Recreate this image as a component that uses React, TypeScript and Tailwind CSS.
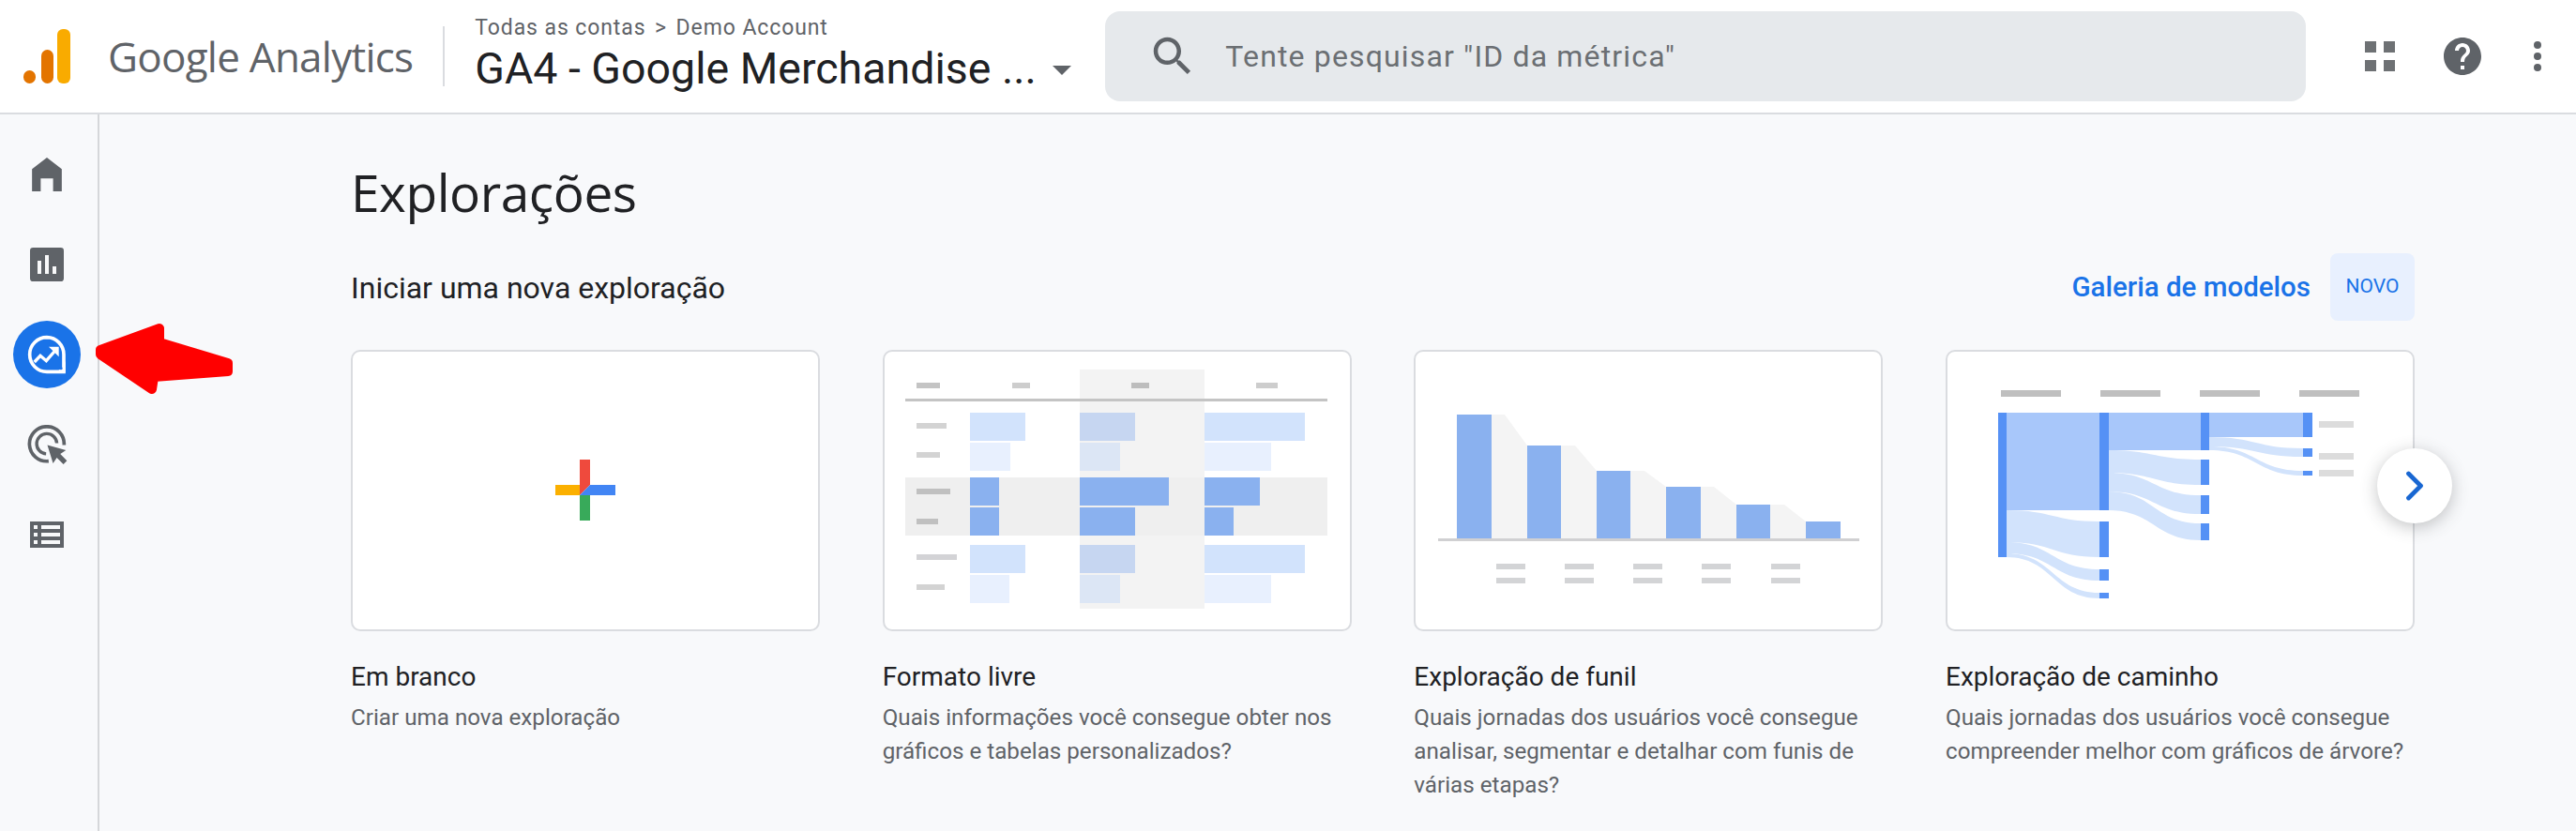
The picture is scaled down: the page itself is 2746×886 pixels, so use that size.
import { ChevronRight } from "lucide-react";

const GREY = "#5f6368";

// bars of the free-form thumbnail: [x, y, width, height, colour]
const freeBars: [number, number, number, number, string][] = [
  [93, 67, 59, 30, "#d2e3fc"],
  [210, 67, 59, 30, "#c6d6f1"],
  [343, 67, 107, 30, "#d2e3fc"],
  [93, 99, 43, 30, "#e8f0fe"],
  [210, 99, 43, 30, "#dce6f5"],
  [343, 99, 71, 30, "#e8f0fe"],
  [93, 136, 31, 30, "#8ab1ef"],
  [210, 136, 95, 30, "#8ab1ef"],
  [343, 136, 59, 30, "#8ab1ef"],
  [93, 168, 31, 30, "#8ab1ef"],
  [210, 168, 59, 30, "#8ab1ef"],
  [343, 168, 31, 30, "#8ab1ef"],
  [93, 208, 59, 30, "#d2e3fc"],
  [210, 208, 59, 30, "#c6d6f1"],
  [343, 208, 107, 30, "#d2e3fc"],
  [93, 240, 42, 30, "#e8f0fe"],
  [210, 240, 43, 30, "#dce6f5"],
  [343, 240, 71, 30, "#e8f0fe"],
];

const freeLabels: [number, number, number, string][] = [
  [36, 35, 25, "#c4c4c4"],
  [138, 35, 19, "#cdcdcd"],
  [265, 35, 19, "#bdbdbd"],
  [398, 35, 23, "#cdcdcd"],
  [36, 78, 32, "#d3d3d3"],
  [36, 109, 25, "#d3d3d3"],
  [36, 148, 36, "#c0c0c0"],
  [36, 180, 23, "#c0c0c0"],
  [36, 218, 43, "#d3d3d6"],
  [36, 250, 30, "#d3d3d3"],
];

const FreeFormThumb = () => (
  <svg viewBox="2 2 496 296" className="h-full w-full">
    <rect x="210" y="21" width="133" height="255" fill="#f3f3f3" />
    <rect x="24" y="136" width="450" height="62" fill="#efefef" />
    <rect x="24" y="52" width="450" height="3" fill="#c4c4c4" />
    {freeLabels.map(([x, y, w, c]) => (
      <rect key={`${x}-${y}`} x={x} y={y} width={w} height="6" fill={c} />
    ))}
    {freeBars.map(([x, y, w, h, c]) => (
      <rect key={`${x}-${y}`} x={x} y={y} width={w} height={h} fill={c} />
    ))}
  </svg>
);

const funnelBars = [
  [46, 69, 37],
  [121, 102, 36],
  [195, 129, 36],
  [269, 146, 37],
  [344, 165, 36],
  [418, 183, 37],
];

const FunnelThumb = () => (
  <svg viewBox="2 2 496 296" className="h-full w-full">
    <polygon points="83,69 97,69 121,102 121,201 83,201" fill="#f4f4f4" />
    <polygon points="157,102 172,102 195,129 195,201 157,201" fill="#f4f4f4" />
    <polygon points="231,129 246,129 269,146 269,201 231,201" fill="#f4f4f4" />
    <polygon points="306,146 320,146 344,165 344,201 306,201" fill="#f4f4f4" />
    <polygon points="380,165 395,165 418,183 418,201 380,201" fill="#f4f4f4" />
    {funnelBars.map(([x, y, w]) => (
      <rect key={x} x={x} y={y} width={w} height={201 - y} fill="#8ab1ef" />
    ))}
    <rect x="26" y="201" width="449" height="3" fill="#d0d0d2" />
    {[88, 161, 234, 307, 381].map((x) => (
      <g key={x} fill="#d3d4d6">
        <rect x={x} y="228" width="31" height="6" />
        <rect x={x} y="243" width="31" height="6" />
      </g>
    ))}
  </svg>
);

// one sankey ribbon between two columns
const ribbon = (x0: number, x1: number, a0: number, a1: number, b0: number, b1: number) => {
  const m = (x0 + x1) / 2;
  return `M${x0} ${a0} C${m} ${a0} ${m} ${b0} ${x1} ${b0} L${x1} ${b1} C${m} ${b1} ${m} ${a1} ${x0} ${a1} Z`;
};

const ribbons = [
  ribbon(65, 164, 171, 205, 183, 221),
  ribbon(65, 164, 205, 217, 234, 246),
  ribbon(65, 164, 217, 221, 259, 265),
  ribbon(173, 272, 107, 131, 117, 144),
  ribbon(173, 272, 131, 151, 155, 175),
  ribbon(173, 272, 151, 171, 185, 203),
  ribbon(281, 381, 93, 103, 105, 114),
  ribbon(281, 381, 103, 107, 129, 134),
];

const pathBars = [
  [56, 67, 9, 154],
  [164, 67, 10, 104],
  [164, 183, 10, 38],
  [164, 234, 10, 12],
  [164, 259, 10, 6],
  [272, 67, 9, 40],
  [272, 117, 9, 27],
  [272, 155, 9, 20],
  [272, 185, 9, 18],
  [381, 67, 10, 26],
  [381, 105, 10, 9],
  [381, 129, 10, 5],
];

const PathThumb = () => (
  <svg viewBox="2 2 496 296" className="h-full w-full">
    {[59, 165, 271, 377].map((x) => (
      <rect key={x} x={x} y="43" width="64" height="7" fill="#bfbfbf" />
    ))}
    {[76, 110, 128].map((y) => (
      <rect key={y} x="398" y={y} width="37" height="7" fill="#dcdcdc" />
    ))}
    {ribbons.map((d) => (
      <path key={d} d={d} fill="#d2e3fc" />
    ))}
    <rect x="65" y="67" width="99" height="104" fill="#a8c7fa" />
    <rect x="174" y="67" width="98" height="40" fill="#a8c7fa" />
    <rect x="281" y="67" width="100" height="26" fill="#a8c7fa" />
    {pathBars.map(([x, y, w, h]) => (
      <rect key={`${x}-${y}`} x={x} y={y} width={w} height={h} fill="#5591f5" />
    ))}
  </svg>
);

const BlankThumb = () => (
  <svg viewBox="2 2 496 296" className="h-full w-full">
    <polygon points="244,117 255,117 255,144 244,155" fill="#ef4a3d" />
    <rect x="218" y="144" width="26" height="11" fill="#fbb000" />
    <polygon points="255,144 282,144 282,155 244,155" fill="#4285f4" />
    <rect x="244" y="155" width="11" height="27" fill="#38aa5a" />
  </svg>
);

const cards = [
  { title: "Em branco", thumb: BlankThumb, lines: ["Criar uma nova exploração"] },
  {
    title: "Formato livre",
    thumb: FreeFormThumb,
    lines: ["Quais informações você consegue obter nos", "gráficos e tabelas personalizados?"],
  },
  {
    title: "Exploração de funil",
    thumb: FunnelThumb,
    lines: [
      "Quais jornadas dos usuários você consegue",
      "analisar, segmentar e detalhar com funis de",
      "várias etapas?",
    ],
  },
  {
    title: "Exploração de caminho",
    thumb: PathThumb,
    lines: ["Quais jornadas dos usuários você consegue", "compreender melhor com gráficos de árvore?"],
  },
];

const HomeIcon = () => (
  <svg viewBox="102 113 96 109" className="h-[36px] w-[32px]">
    <path d="M150 113 L198 150 V222 H170 V180 H130 V222 H102 V150 Z" fill={GREY} />
  </svg>
);

const ReportsIcon = () => (
  <svg viewBox="96 402 108 108" className="h-[36px] w-[36px]">
    <rect x="96" y="402" width="108" height="108" rx="10" fill={GREY} />
    <rect x="120" y="444" width="12" height="42" fill="#f8f9fa" />
    <rect x="144" y="426" width="12" height="60" fill="#f8f9fa" />
    <rect x="168" y="462" width="12" height="24" fill="#f8f9fa" />
  </svg>
);

const ExploreIcon = () => (
  <div className="flex h-[72px] w-[72px] items-center justify-center rounded-full bg-[#1a73e8]">
    <svg viewBox="84 678 132 132" className="h-[44px] w-[44px]">
      <path
        d="M150 689 A55 55 0 1 0 150 799 H204 V744 A55 55 0 0 0 150 689 Z"
        fill="none"
        stroke="#fff"
        strokeWidth="11"
      />
      <path d="M172 802 H209 V764 Q205 790 172 802 Z" fill="#fff" />
      <circle cx="195" cy="788" r="5" fill="#1a73e8" />
      <path d="M110 768 L129 748 L148 764 L176 732" fill="none" stroke="#fff" strokeWidth="10" />
      <path d="M156 719 H188 V751 Z" fill="#fff" />
    </svg>
  </div>
);

const AdvertisingIcon = () => (
  <svg viewBox="88 970 128 128" className="h-[43px] w-[43px]">
    <path d="M156 1085 A55 55 0 1 1 205 1034" fill="none" stroke={GREY} strokeWidth="11" />
    <path d="M148 1062 A32 32 0 1 1 182 1028" fill="none" stroke={GREY} strokeWidth="10" />
    <path d="M152 1034 L211 1050 L193 1062 L214 1084 L203 1095 L182 1074 L170 1092 Z" fill={GREY} />
  </svg>
);

const ConfigureIcon = () => (
  <svg viewBox="96 1278 108 84" className="h-[28px] w-[36px]">
    <rect x="96" y="1278" width="108" height="84" fill={GREY} />
    {[1290, 1314, 1338].map((y) => (
      <g key={y} fill="#f8f9fa">
        <rect x="108" y={y} width="12" height="12" />
        <rect x="132" y={y} width="60" height="12" />
      </g>
    ))}
  </svg>
);

const navIcons = [HomeIcon, ReportsIcon, ExploreIcon, AdvertisingIcon, ConfigureIcon];

export default function App() {
  return (
    <div className="relative flex h-[886px] flex-col overflow-hidden bg-[#f8f9fb] font-['Roboto',sans-serif]">
      {/* top bar */}
      <header className="flex h-[122px] shrink-0 items-center border-b-2 border-[#dadce0] bg-white">
        <svg viewBox="0 0 50 58" className="ml-[25px] h-[58px] w-[50px] shrink-0">
          <rect x="0" y="44" width="13" height="14" rx="6.5" fill="#e37400" />
          <rect x="19" y="22" width="13" height="36" rx="6.5" fill="#e37400" />
          <rect x="36" y="0" width="14" height="58" rx="6" fill="#f9ab00" />
        </svg>
        <span className="ml-[40px] font-['Open_Sans',sans-serif] text-[44px] leading-none tracking-[-0.75px] text-[#5f6368]">
          Google Analytics
        </span>
        <div className="ml-[32px] h-[64px] w-[2px] shrink-0 bg-[#dadce0]" />
        <div className="mb-[6px] ml-[32px] flex w-[640px] shrink-0 flex-col">
          <span className="text-[23px] leading-[28px] tracking-[0.9px] text-[#5f6368]">
            Todas as contas <span className="mx-[3px]">&gt;</span> Demo Account
          </span>
          <div className="mt-[4px] flex items-center">
            <span className="text-[46.5px] leading-[50px] text-[#202124]">GA4 - Google Merchandise ...</span>
            <div className="ml-[17px] mt-[4px] h-0 w-0 border-x-[10px] border-t-[10px] border-x-transparent border-t-[#5f6368]" />
          </div>
        </div>
        <div className="ml-[32px] flex h-[96px] w-[1280px] shrink-0 items-center rounded-[16px] bg-[#e6e9ec] pl-[45px]">
          <svg viewBox="0 0 24 24" className="h-[54px] w-[54px] shrink-0" fill={GREY}>
            <path d="M15.5 14h-.79l-.28-.27C15.41 12.59 16 11.11 16 9.5 16 5.91 13.09 3 9.5 3S3 5.91 3 9.5 5.91 16 9.5 16c1.61 0 3.09-.59 4.23-1.57l.27.28v.79l5 4.99L20.49 19l-4.99-5zm-6 0C7.01 14 5 11.99 5 9.5S7.01 5 9.5 5 14 7.01 14 9.5 11.99 14 9.5 14z" />
          </svg>
          <span className="ml-[29px] text-[32px] tracking-[1.15px] text-[#6b6f73]">Tente pesquisar "ID da métrica"</span>
        </div>
        <div className="ml-[63px] grid w-[32px] shrink-0 grid-cols-2 gap-x-[8px] gap-y-[8px]">
          <div className="h-[12px] w-[12px] bg-[#6e7174]" />
          <div className="h-[12px] w-[12px] bg-[#6e7174]" />
          <div className="h-[12px] w-[12px] bg-[#6e7174]" />
          <div className="h-[12px] w-[12px] bg-[#6e7174]" />
        </div>
        <svg viewBox="0 0 24 24" className="ml-[48px] h-[48px] w-[48px] shrink-0" fill={GREY}>
          <path d="M12 2C6.48 2 2 6.48 2 12s4.48 10 10 10 10-4.48 10-10S17.52 2 12 2zm1 17h-2v-2h2v2zm2.07-7.75l-.9.92C13.45 12.9 13 13.5 13 15h-2v-.5c0-1.1.45-2.1 1.17-2.83l1.24-1.26c.37-.36.59-.86.59-1.41 0-1.1-.9-2-2-2s-2 .9-2 2H8c0-2.21 1.79-4 4-4s4 1.79 4 4c0 .88-.36 1.68-.93 2.25z" />
        </svg>
        <div className="ml-[52px] flex shrink-0 flex-col gap-[4px]">
          <div className="h-[8px] w-[8px] rounded-full bg-[#5f6368]" />
          <div className="h-[8px] w-[8px] rounded-full bg-[#5f6368]" />
          <div className="h-[8px] w-[8px] rounded-full bg-[#5f6368]" />
        </div>
      </header>

      <div className="flex min-h-0 flex-1">
        {/* left rail */}
        <nav className="flex w-[106px] shrink-0 flex-col items-center border-r-2 border-[#d5d7da] pt-[16px] pr-[4px]">
          {navIcons.map((Icon, i) => (
            <div key={i} className="flex h-[96px] w-full items-center justify-center">
              <Icon />
            </div>
          ))}
        </nav>

        <main className="min-w-0 flex-1 pl-[268px] pr-[172px]">
          <h1 className="mt-[53px] font-['Open_Sans',sans-serif] text-[55px] leading-[60px] tracking-[-0.45px] text-[#202124]">
            Explorações
          </h1>
          <div className="mt-[35px] flex h-[72px] items-center">
            <h2 className="pt-[2px] text-[32px] text-[#202124]">Iniciar uma nova exploração</h2>
            <span className="ml-auto text-[29.5px] font-medium text-[#1a73e8]">Galeria de modelos</span>
            <span className="ml-[21px] flex h-[72px] w-[90px] items-center justify-center rounded-[8px] bg-[#e8f0fe] text-[21px] text-[#1a73e8]">
              NOVO
            </span>
          </div>
          <div className="mt-[31px] grid grid-cols-4 gap-x-[66.67px]">
            {cards.map(({ title, thumb: Thumb, lines }) => (
              <section key={title}>
                <div className="h-[300px] overflow-hidden rounded-[10px] border-2 border-[#dadce0] bg-white">
                  <Thumb />
                </div>
                <h3 className="mt-[32px] text-[28px] leading-[34px] text-[#202124]">{title}</h3>
                <div className="mt-[8px] text-[24.2px] leading-[36px] text-[#5f6368]">
                  {lines.map((l) => (
                    <p key={l} className="whitespace-nowrap">
                      {l}
                    </p>
                  ))}
                </div>
              </section>
            ))}
          </div>
        </main>
      </div>

      {/* carousel button */}
      <button className="absolute left-[2534px] top-[478px] flex h-[80px] w-[80px] items-center justify-center rounded-full bg-white shadow-[0_4px_18px_rgba(60,64,67,0.3)]">
        <ChevronRight className="h-[52px] w-[52px] text-[#1967d2]" strokeWidth={2.2} />
      </button>

      {/* red annotation arrow */}
      <svg viewBox="0 0 2746 886" className="pointer-events-none absolute inset-0 h-[886px] w-[2746px]">
        <path
          d="M107 373 L170 350 L170 365 L243 387 L243 396 L164 402 L162 415 L107 378 Z"
          fill="#ff0000"
          stroke="#ff0000"
          strokeWidth="10"
          strokeLinejoin="round"
        />
      </svg>
    </div>
  );
}
